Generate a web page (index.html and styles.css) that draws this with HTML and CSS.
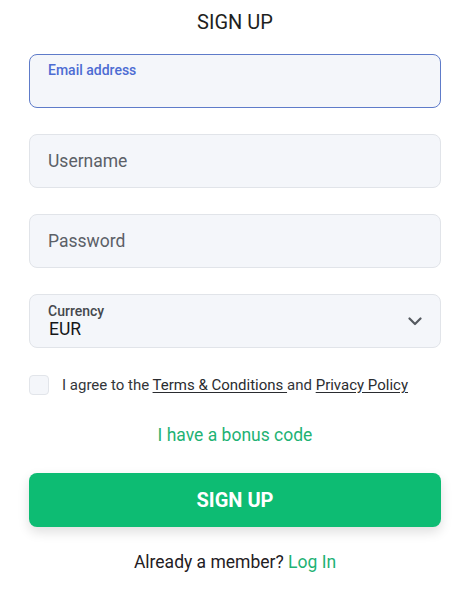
FILE: index.html
```html
<!DOCTYPE html>
<html lang="en">
<head>
<meta charset="utf-8">
<title>Sign up</title>
<link rel="stylesheet" href="styles.css">
</head>
<body>
<main class="signup">
  <h1 class="title">SIGN UP</h1>
  <form class="form">
    <label class="field field--active">
      <span class="field-label field-label--blue">Email address</span>
      <input class="field-input" type="email">
    </label>
    <div class="field field--plain">
      <input class="field-input field-input--big" type="text" placeholder="Username">
    </div>
    <div class="field field--plain">
      <input class="field-input field-input--big" type="password" placeholder="Password">
    </div>
    <div class="field field--select">
      <div class="select-text">
        <span class="field-label">Currency</span>
        <span class="select-value">EUR</span>
      </div>
      <svg class="chevron" width="14" height="9" viewBox="0 0 14 9" aria-hidden="true"><polyline points="1.5,1.5 7,7 12.5,1.5" fill="none" stroke="#555a60" stroke-width="2.2" stroke-linecap="round" stroke-linejoin="round"/></svg>
    </div>
    <div class="agree">
      <span class="checkbox"></span>
      <span class="agree-text">I agree to the <a class="u" href="#">Terms &amp; Conditions </a>and <a class="u" href="#">Privacy Policy</a></span>
    </div>
    <a class="bonus" href="#">I have a bonus code</a>
    <button class="submit" type="button">SIGN UP</button>
    <p class="member">Already a member? <a class="login" href="#">Log In</a></p>
  </form>
</main>
</body>
</html>
```

FILE: styles.css
```css
* { box-sizing: border-box; }
html, body { margin: 0; padding: 0; background: #ffffff; }
body {
  font-family: Roboto, "Liberation Sans", Arial, sans-serif;
  color: #222;
}
.signup {
  padding: 10px 32px 0 29px;
}
.title {
  margin: 0;
  font-size: 20px;
  line-height: 24px;
  font-weight: 400;
  text-align: center;
  color: #1e1f21;
}
.form {
  display: flex;
  flex-direction: column;
  margin-top: 20px;
}
.field {
  display: flex;
  height: 54px;
  border: 1px solid #e1e4e9;
  border-radius: 8px;
  background: #f4f6fa;
  margin-bottom: 26px;
  padding: 0 18px;
}
.field--active {
  flex-direction: column;
  border-color: #5e7bc9;
  padding-top: 7px;
}
.field--plain { align-items: center; }
.field--select {
  align-items: center;
  justify-content: space-between;
  padding-top: 0;
  margin-bottom: 27px;
}
.field-label {
  font-size: 14px;
  line-height: 16px;
  font-weight: 500;
  color: #45484d;
}
.field-label--blue { color: #4d6cd3; }
.field-input {
  border: 0;
  outline: 0;
  background: transparent;
  padding: 0;
  margin: 0;
  font-family: inherit;
  font-size: 17px;
  color: #222;
  width: 100%;
}
.field-input--big {
  font-size: 17.5px;
  line-height: 22px;
  height: 22px;
  margin-top: 0;
}
.field-input--big::placeholder { color: #5b6067; opacity: 1; }
.select-text {
  display: flex;
  flex-direction: column;
}
.select-value {
  font-size: 17.5px;
  line-height: 20px;
  color: #151618;
  padding-left: 1px;
}
.chevron { margin-right: 0; margin-top: 0; }
.agree {
  display: flex;
  align-items: center;
  gap: 13px;
  height: 20px;
}
.checkbox {
  width: 20px;
  height: 20px;
  flex: none;
  border: 1px solid #e2e5ea;
  border-radius: 4px;
  background: #f4f6fa;
}
.agree-text {
  font-size: 15px;
  color: #33363a;
  white-space: nowrap;
}
.u { color: #2a2c30; text-decoration: underline; text-underline-offset: 2px; }
.bonus {
  align-self: center;
  margin-top: 28px;
  font-size: 17.5px;
  line-height: 24px;
  color: #1eb274;
  text-decoration: none;
}
.submit {
  margin-top: 26px;
  height: 54px;
  border: 0;
  border-radius: 8px;
  background: #0dbc73;
  color: #ffffff;
  font-family: inherit;
  font-size: 20px;
  font-weight: 700;
  box-shadow: 0 5px 12px rgba(0, 0, 0, 0.13);
}
.member {
  margin: 23px 0 0;
  text-align: center;
  font-size: 17.5px;
  line-height: 24px;
  color: #1f2023;
}
.login { color: #1eb274; text-decoration: none; }
```
